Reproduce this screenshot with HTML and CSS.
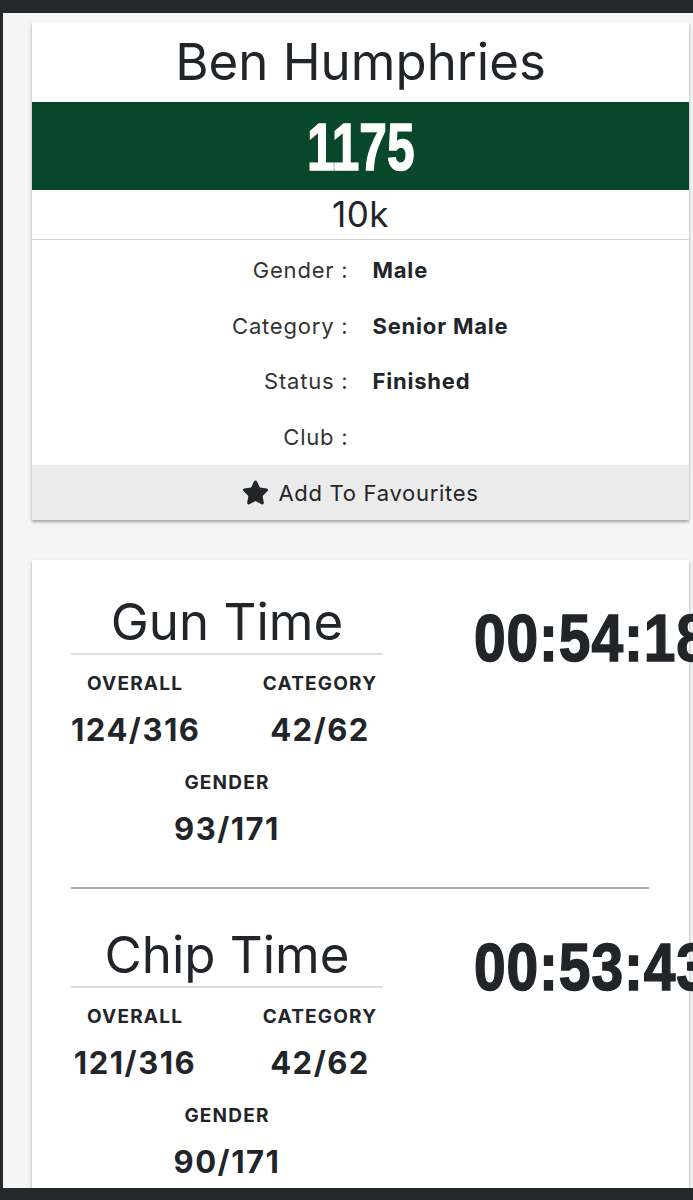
FILE: index.html
```html
<!DOCTYPE html>
<html lang="en">
<head>
  <meta charset="UTF-8">
  <meta name="viewport" content="width=device-width, initial-scale=1.0">
  <title>Ben Humphries - 10k Result</title>
  <link rel="stylesheet" href="styles.css">
</head>
<body>
  <div class="screen">
    <div class="card runner">
      <h1 class="runner-name">Ben Humphries</h1>
      <div class="bib"><span class="narrow">1175</span></div>
      <div class="race">10k</div>
      <div class="details">
        <div class="detail-label">Gender :</div>
        <div class="detail-value">Male</div>
        <div class="detail-label">Category :</div>
        <div class="detail-value">Senior Male</div>
        <div class="detail-label">Status :</div>
        <div class="detail-value">Finished</div>
        <div class="detail-label">Club :</div>
        <div class="detail-value"></div>
      </div>
      <div class="favourite">
        <svg class="star" viewBox="0 0 576 512"><path d="M259.3 17.8L194 150.2 47.9 171.5c-26.2 3.8-36.7 36.1-17.7 54.6l105.7 103-25 145.5c-4.5 26.3 23.2 46 46.4 33.7L288 439.6l130.7 68.7c23.2 12.2 50.9-7.4 46.4-33.7l-25-145.5 105.7-103c19-18.5 8.5-50.8-17.7-54.6L382 150.2 316.7 17.8c-11.7-23.6-45.6-23.9-57.4 0z"/></svg>
        <span>Add To Favourites</span>
      </div>
    </div>

    <div class="card times">
      <div class="time-section">
        <div class="time-info">
          <h2 class="time-title">Gun Time</h2>
          <div class="stats">
            <div class="stat">
              <div class="stat-label">Overall</div>
              <div class="stat-value">124/316</div>
            </div>
            <div class="stat">
              <div class="stat-label">Category</div>
              <div class="stat-value">42/62</div>
            </div>
            <div class="stat stat-wide">
              <div class="stat-label">Gender</div>
              <div class="stat-value">93/171</div>
            </div>
          </div>
        </div>
        <div class="time-value"><span class="narrow">00:54:18</span></div>
      </div>

      <hr class="divider">

      <div class="time-section">
        <div class="time-info">
          <h2 class="time-title">Chip Time</h2>
          <div class="stats">
            <div class="stat">
              <div class="stat-label">Overall</div>
              <div class="stat-value">121/316</div>
            </div>
            <div class="stat">
              <div class="stat-label">Category</div>
              <div class="stat-value">42/62</div>
            </div>
            <div class="stat stat-wide">
              <div class="stat-label">Gender</div>
              <div class="stat-value">90/171</div>
            </div>
          </div>
        </div>
        <div class="time-value"><span class="narrow">00:53:43</span></div>
      </div>
    </div>
  </div>
</body>
</html>
```

FILE: styles.css
```css
html, body {
  margin: 0;
  overflow: hidden;
}
body {
  background: #25282d;
  font-family: Inter, "Noto Sans", sans-serif;
  color: #212529;
  height: 1200px;
}
.screen {
  margin: 13px 0 0 3px;
  height: 1175px;
  background: #f5f5f5;
  overflow: hidden;
  padding-top: 9px;
  box-sizing: border-box;
}
.card {
  width: 657px;
  margin-left: 29px;
  background: #fff;
  box-shadow: 0 2px 3px rgba(0, 0, 0, 0.35);
}
.narrow {
  display: inline-block;
  font-family: "Liberation Sans", Arial, sans-serif;
  font-weight: 700;
  -webkit-text-stroke: 1.5px currentColor;
}

/* runner card */
.runner-name {
  margin: 0;
  height: 80px;
  line-height: 80px;
  text-align: center;
  font-size: 51px;
  font-weight: 400;
}
.bib {
  background: #08472a;
  color: #fff;
  height: 88px;
  line-height: 88px;
  text-align: center;
  font-size: 67px;
}
.bib .narrow {
  transform: scaleX(0.74);
}
.race {
  height: 49px;
  line-height: 49px;
  text-align: center;
  font-size: 35px;
  letter-spacing: 0.5px;
  border-bottom: 1px solid #d3d3d3;
}
.details {
  display: grid;
  grid-template-columns: 1fr 1fr;
  grid-auto-rows: 55.75px;
  column-gap: 24px;
  align-items: center;
  padding-top: 2px;
  font-size: 22px;
  letter-spacing: 0.8px;
}
.detail-label {
  text-align: right;
  color: #333;
}
.detail-value {
  font-weight: 700;
}
.favourite {
  height: 55px;
  background: #ebebeb;
  display: flex;
  align-items: center;
  justify-content: center;
  gap: 9px;
  font-size: 22px;
  letter-spacing: 0.7px;
}
.star {
  width: 27px;
  height: 25px;
  fill: #212529;
}

/* times card */
.times {
  margin-top: 40px;
  height: 700px;
  padding: 0 40px 0 39px;
  box-sizing: border-box;
}
.time-section {
  display: grid;
  grid-template-columns: 312px 1fr;
  column-gap: 91px;
}
.time-title {
  margin: 31px 0 0;
  line-height: 62px;
  font-size: 51px;
  font-weight: 400;
  text-align: center;
  border-bottom: 2px solid #ddd;
}
.stats {
  display: grid;
  grid-template-columns: 128px 126px;
  justify-content: space-between;
  row-gap: 24px;
  margin-top: 18px;
  text-align: center;
}
.stat {
  display: flex;
  flex-direction: column;
  gap: 17px;
}
.stat-wide {
  grid-column: 1 / -1;
}
.stat-label {
  line-height: 22px;
  font-size: 19px;
  font-weight: 700;
  text-transform: uppercase;
  letter-spacing: 1.2px;
}
.stat-value {
  line-height: 36px;
  font-size: 31px;
  font-weight: 700;
  letter-spacing: 1.5px;
  white-space: nowrap;
}
.time-value {
  margin-top: 37px;
  white-space: nowrap;
  font-size: 67px;
  line-height: 80px;
}
.time-value .narrow {
  transform: scaleX(0.85);
  transform-origin: left center;
  letter-spacing: 1px;
}
.divider {
  margin: 40px 0 0;
  border: 0;
  border-top: 2px solid #aaa;
}
.divider + .time-section .time-title {
  margin-top: 35px;
}
```
